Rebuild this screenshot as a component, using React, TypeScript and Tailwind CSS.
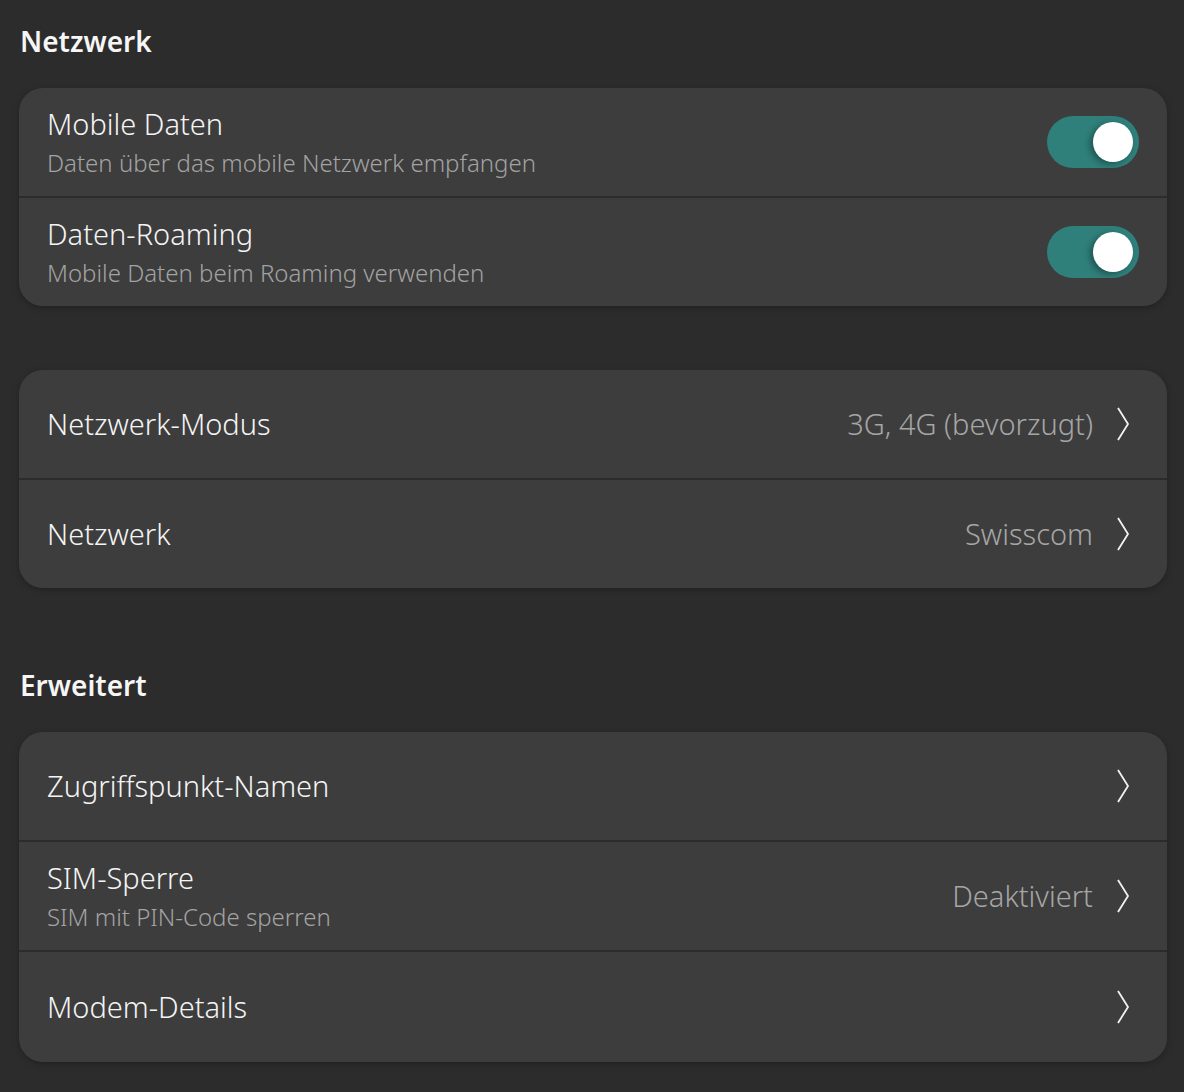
import React from "react";

const font = { fontFamily: '"Noto Sans", "Open Sans", sans-serif' };

const Chevron = () => (
  <svg width="14" height="34" viewBox="0 0 14 34" className="shrink-0">
    <path d="M2 1 L12 17 L2 33" fill="none" stroke="#f2f2f2" strokeWidth="1.8" strokeLinejoin="miter" />
  </svg>
);

const Toggle = () => (
  <div className="relative w-[92px] h-[52px] rounded-full bg-[#2f7f7b] shrink-0">
    <div className="absolute right-[6px] top-[6px] w-[40px] h-[40px] rounded-full bg-white shadow-[-3px_2px_6px_rgba(0,0,0,0.35)]" />
  </div>
);

type RowProps = {
  title: string;
  subtitle?: string;
  value?: string;
  toggle?: boolean;
  tall?: boolean;
};

const Row = ({ title, subtitle, value, toggle, tall }: RowProps) => (
  <div className={`flex items-center ${tall ? "h-[110px]" : "h-[108px]"} pl-[28px] pr-[28px] bg-[#3d3d3d]`}>
    <div className="flex flex-col flex-1 min-w-0">
      <span className="text-[29px] leading-[38px] font-light text-[#f4f4f4]">{title}</span>
      {subtitle && (
        <span className="mt-[4px] text-[24px] leading-[32px] font-light text-[#a3a3a3]">{subtitle}</span>
      )}
    </div>
    {toggle ? (
      <Toggle />
    ) : (
      <div className="flex items-center gap-[23px] pr-[9px]">
        {value && <span className="text-[29px] font-light text-[#a6a6a6]">{value}</span>}
        <Chevron />
      </div>
    )}
  </div>
);

const Card = ({ children }: { children: React.ReactNode }) => (
  <div className="flex flex-col gap-[2px] bg-[#2c2c2c] rounded-[24px] overflow-hidden shadow-[0_2px_6px_rgba(0,0,0,0.25)]">
    {children}
  </div>
);

const Header = ({ children }: { children: React.ReactNode }) => (
  <div className="h-[88px] flex items-center pl-px pb-[6px]">
    <h2 className="text-[28px] font-semibold text-[#f6f6f6]">{children}</h2>
  </div>
);

export default function App() {
  return (
    <div className="min-h-[1092px] w-full bg-[#2c2c2c] px-[19px] pr-[17px]" style={font}>
      <Header>Netzwerk</Header>
      <Card>
        <Row title="Mobile Daten" subtitle="Daten über das mobile Netzwerk empfangen" toggle />
        <Row title="Daten-Roaming" subtitle="Mobile Daten beim Roaming verwenden" toggle />
      </Card>
      <div className="h-[64px]" />
      <Card>
        <Row title="Netzwerk-Modus" value="3G, 4G (bevorzugt)" />
        <Row title="Netzwerk" value="Swisscom" />
      </Card>
      <div className="h-[56px]" />
      <Header>Erweitert</Header>
      <Card>
        <Row title="Zugriffspunkt-Namen" />
        <Row title="SIM-Sperre" subtitle="SIM mit PIN-Code sperren" value="Deaktiviert" />
        <Row title="Modem-Details" tall />
      </Card>
    </div>
  );
}
